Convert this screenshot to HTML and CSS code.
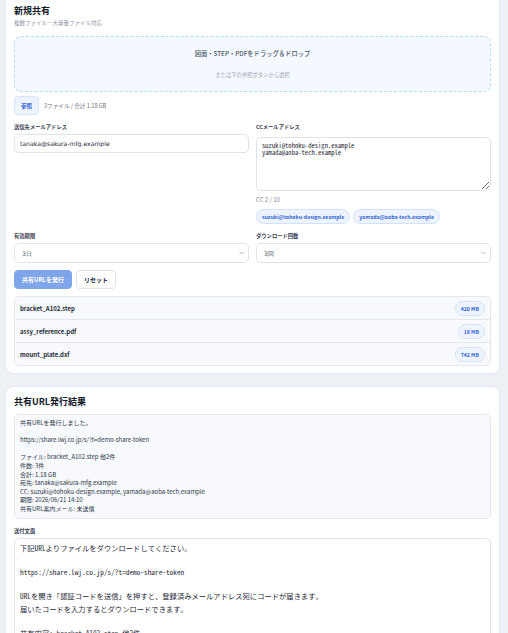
FILE: index.html
```html
<!DOCTYPE html>
<html lang="ja">
<head>
    <meta charset="UTF-8">
    <meta name="viewport" content="width=device-width, initial-scale=1.0">
    <title>ファイル共有</title>
    <link rel="stylesheet" href="styles.css">
</head>
<body>
    <div class="page">
        <section class="card">
            <h2 class="card-title">新規共有</h2>
            <p class="card-sub">複数ファイル・大容量ファイル対応</p>

            <div class="dropzone">
                <p class="drop-main">図面・STEP・PDFをドラッグ＆ドロップ</p>
                <p class="drop-sub">または下の参照ボタンから選択</p>
            </div>

            <div class="picker">
                <button type="button" class="btn-browse">参照</button>
                <span class="picker-info">3ファイル / 合計 1.18 GB</span>
            </div>

            <div class="form-grid">
                <div class="field">
                    <label class="field-label">送信先メールアドレス</label>
                    <input type="text" class="text-input" value="tanaka@sakura-mfg.example">
                </div>
                <div class="field">
                    <label class="field-label">CCメールアドレス</label>
                    <textarea class="cc-input">suzuki@tohoku-design.example
yamada@aoba-tech.example</textarea>
                    <p class="cc-count">CC 2 / 10</p>
                    <div class="chips">
                        <span class="chip">suzuki@tohoku-design.example</span>
                        <span class="chip">yamada@aoba-tech.example</span>
                    </div>
                </div>
                <div class="field">
                    <label class="field-label">有効期限</label>
                    <div class="select-wrap">
                        <select class="select-input"><option>3日</option></select>
                        <svg class="chevron" viewBox="0 0 8 5"><path d="M1 1l3 3 3-3" fill="none" stroke="#7b8491" stroke-width="1"/></svg>
                    </div>
                </div>
                <div class="field">
                    <label class="field-label">ダウンロード回数</label>
                    <div class="select-wrap">
                        <select class="select-input"><option>3回</option></select>
                        <svg class="chevron" viewBox="0 0 8 5"><path d="M1 1l3 3 3-3" fill="none" stroke="#7b8491" stroke-width="1"/></svg>
                    </div>
                </div>
            </div>

            <div class="actions">
                <button type="button" class="btn-primary">共有URLを発行</button>
                <button type="button" class="btn-reset">リセット</button>
            </div>

            <ul class="file-list">
                <li class="file-row"><span class="file-name">bracket_A102.step</span><span class="size-chip">420 MB</span></li>
                <li class="file-row"><span class="file-name">assy_reference.pdf</span><span class="size-chip">18 MB</span></li>
                <li class="file-row"><span class="file-name">mount_plate.dxf</span><span class="size-chip">742 MB</span></li>
            </ul>
        </section>

        <section class="card">
            <h2 class="card-title">共有URL発行結果</h2>
            <div class="result">共有URLを発行しました。

https://share.lwj.co.jp/s/?t=demo-share-token

ファイル: bracket_A102.step 他2件
件数: 3件
合計: 1.18 GB
宛先: tanaka@sakura-mfg.example
CC: suzuki@tohoku-design.example, yamada@aoba-tech.example
期限: 2026/06/21 14:10
共有URL案内メール: 未送信</div>

            <label class="field-label mail-label">送付文面</label>
            <textarea class="mail-body">下記URLよりファイルをダウンロードしてください。

https://share.lwj.co.jp/s/?t=demo-share-token

URLを開き「認証コードを送信」を押すと、登録済みメールアドレス宛にコードが届きます。
届いたコードを入力するとダウンロードできます。

共有内容: bracket_A102.step 他2件
件数: 3件
合計: 1.18 GB
有効期限: 2026/06/21 14:10</textarea>
        </section>
    </div>
</body>
</html>
```

FILE: styles.css
```css
body {
    margin: 0;
    background-color: #edf0f5;
    font-family: "Noto Sans CJK JP", "Noto Sans", sans-serif;
    color: #1f2937;
}
.page {
    padding: 0 8px 0 5px;
    margin-top: -5px;
}
.card {
    background: #fff;
    border: 1px solid #e5e9f0;
    border-radius: 8px;
    padding: 9px 8px 7px;
    margin-bottom: 12px;
}
.card-title {
    margin: 0;
    font-size: 9px;
    line-height: 12px;
    font-weight: 700;
    color: #111827;
}
.card-sub {
    margin: 2px 0 0;
    font-size: 5.5px;
    line-height: 8px;
    color: #8a94a3;
}
.dropzone {
    margin-top: 9px;
    padding: 12px 0;
    background: #f4f9ff;
    border: 1px dashed #b8def3;
    border-radius: 7px;
    text-align: center;
}
.drop-main {
    margin: 0;
    font-size: 6.3px;
    line-height: 10px;
    font-weight: 500;
    color: #4b5563;
}
.drop-sub {
    margin: 12px 0 0;
    font-size: 5.3px;
    line-height: 8px;
    color: #9ca3af;
}
.picker {
    display: flex;
    align-items: center;
    gap: 5px;
    margin-top: 4px;
}
.btn-browse {
    height: 19px;
    padding: 0 6px;
    background: #eef4ff;
    border: 1px solid #d8e5fb;
    border-radius: 4px;
    font-family: inherit;
    font-size: 5.5px;
    font-weight: 700;
    color: #3466d6;
}
.picker-info {
    font-size: 5.6px;
    color: #6b7280;
}
.form-grid {
    display: grid;
    grid-template-columns: minmax(0, 1fr) minmax(0, 1fr);
    column-gap: 7px;
    row-gap: 8px;
    margin-top: 8px;
}
.field {
    display: flex;
    flex-direction: column;
    min-width: 0;
}
.field-label {
    display: block;
    font-size: 5.3px;
    line-height: 8px;
    font-weight: 600;
    color: #374151;
}
.text-input, .select-input, .cc-input, .mail-body {
    box-sizing: border-box;
    width: 100%;
    border: 1px solid #dfe4ea;
    border-radius: 5px;
    background: #fff;
    color: #1f2937;
}
.text-input {
    height: 19px;
    margin-top: 3px;
    padding: 0 5px;
    font-family: "DejaVu Sans", sans-serif;
    font-size: 6.1px;
}
.cc-input {
    height: 54px;
    margin-top: 6px;
    padding: 4px 5px;
    font-family: "Noto Sans Mono CJK JP", "DejaVu Sans Mono", monospace;
    font-size: 6.6px;
    line-height: 7px;
}
.cc-count {
    margin: 5px 0 0;
    font-size: 6px;
    line-height: 8px;
    color: #7d8794;
}
.chips {
    display: flex;
    gap: 3px;
    margin-top: 5px;
}
.chip, .size-chip {
    display: inline-flex;
    align-items: center;
    height: 15px;
    box-sizing: border-box;
    padding: 0 5px;
    background: #eef4ff;
    border: 1px solid #d3e2fb;
    border-radius: 8px;
    font-size: 5.2px;
    font-weight: 700;
    color: #2f63d6;
}
.select-wrap {
    position: relative;
    margin-top: 3px;
}
.select-input {
    display: block;
    -webkit-appearance: none;
    appearance: none;
    height: 20px;
    padding: 0 7px;
    font-family: "DejaVu Sans", sans-serif;
    font-size: 6.2px;
    color: #4b5563;
}
.chevron {
    position: absolute;
    right: 5px;
    top: 8px;
    width: 5px;
    height: 4px;
}
.actions {
    display: flex;
    gap: 4px;
    margin-top: 7px;
}
.btn-primary, .btn-reset {
    height: 19px;
    padding: 0 7px;
    border-radius: 4px;
    font-family: inherit;
    font-size: 6px;
    font-weight: 700;
}
.btn-primary {
    background: #7fa5ea;
    border: 1px solid #7fa5ea;
    color: #fff;
}
.btn-reset {
    background: #fff;
    border: 1px solid #dfe4ea;
    color: #1f2937;
}
.file-list {
    list-style: none;
    margin: 7px 0 0;
    padding: 0;
    background: #f7f9fc;
    border: 1px solid #e3e8ef;
    border-radius: 5px;
}
.file-row {
    display: flex;
    align-items: center;
    justify-content: space-between;
    height: 22px;
    padding: 0 5px;
    border-top: 1px solid #e3e8ef;
}
.file-row:first-child {
    border-top: none;
}
.file-name {
    font-size: 6px;
    font-weight: 600;
    color: #1f2937;
}
.result {
    margin-top: 6px;
    padding: 4px 5px;
    background: #f7f9fc;
    border: 1px solid #e4e9f0;
    border-radius: 5px;
    white-space: pre-wrap;
    font-size: 6px;
    line-height: 8.6px;
    color: #2d3748;
}
.mail-label {
    margin-top: 8px;
}
.mail-body {
    display: block;
    height: 200px;
    margin-top: 3px;
    padding: 3px 5px;
    font-family: "Noto Sans Mono CJK JP", "DejaVu Sans Mono", monospace;
    font-size: 7.3px;
    line-height: 12.2px;
    resize: vertical;
}
```
